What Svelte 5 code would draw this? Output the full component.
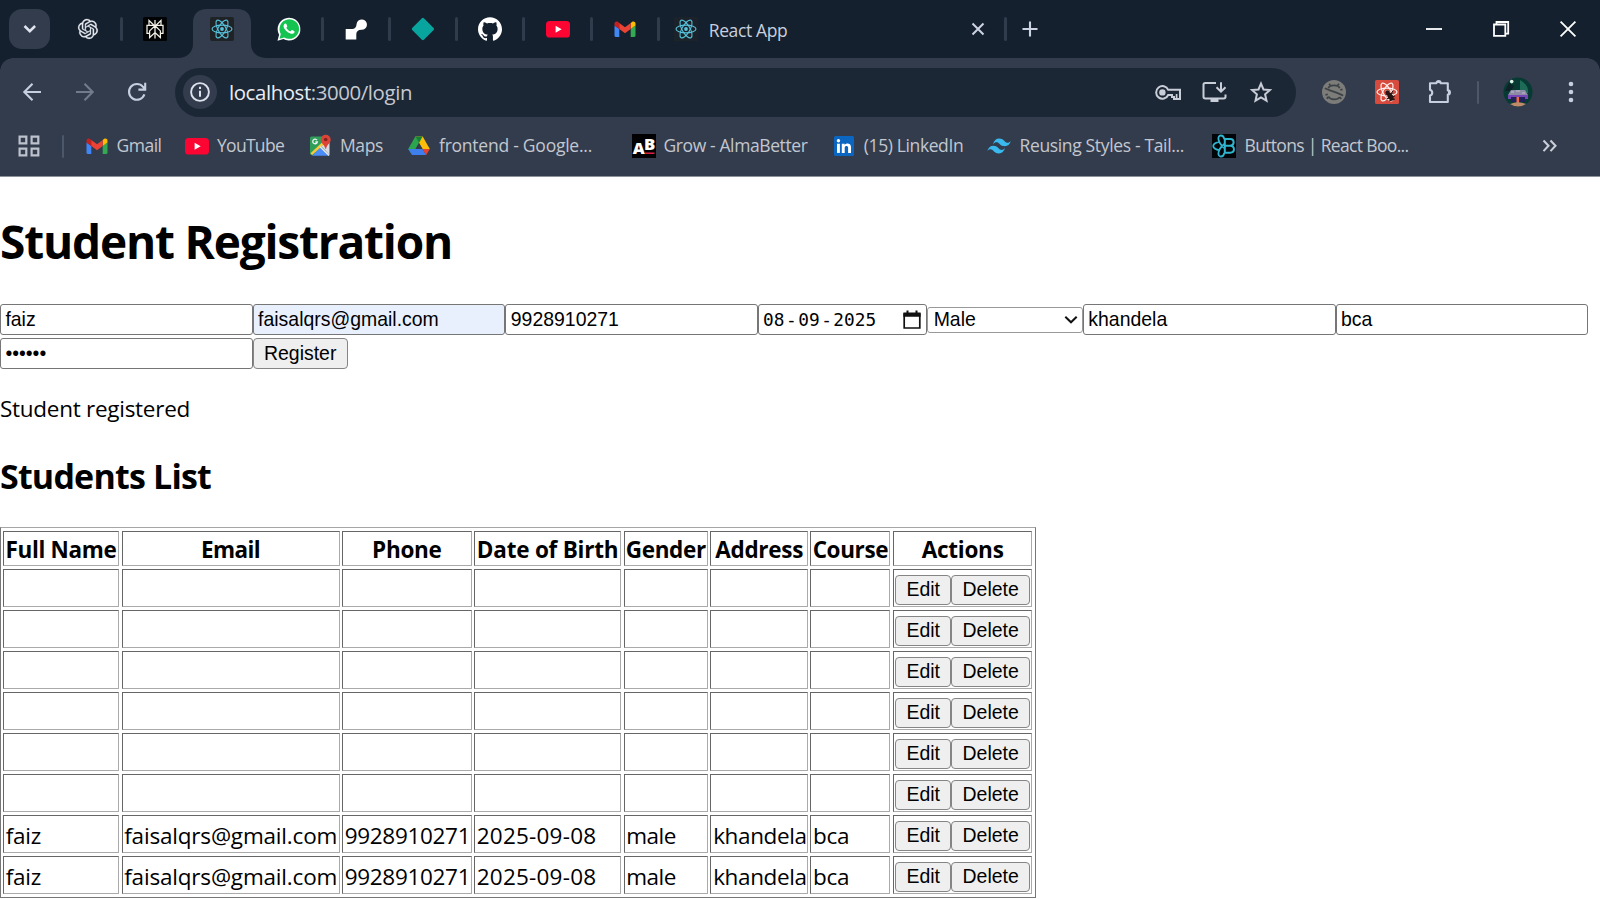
<script>
  // Adjusts letter spacing so that a label takes the given width.
  function fit(node, width) {
    const natural = node.getBoundingClientRect().width;
    node.style.letterSpacing = (width - natural) / node.textContent.length + 'px';
  }

  const tabs = [
    { icon: 'openai', sep: true },
    { icon: 'perplexity' },
    { icon: 'react', active: true },
    { icon: 'whatsapp', sep: true },
    { icon: 'shape', sep: true },
    { icon: 'diamond', sep: true },
    { icon: 'github', sep: true },
    { icon: 'youtube', sep: true },
    { icon: 'gmail', sep: true }
  ];

  const bookmarks = [
    { icon: 'gmail', label: 'Gmail', left: 85, gap: 7.5, width: 45 },
    { icon: 'youtube', label: 'YouTube', left: 184.5, gap: 8.5, width: 67 },
    { icon: 'maps', label: 'Maps', left: 308, gap: 8, width: 43 },
    { icon: 'drive', label: 'frontend - Google...', left: 406.5, gap: 8.5, width: 153 },
    { icon: 'ab', label: 'Grow - AlmaBetter', left: 631.5, gap: 8, width: 144 },
    { icon: 'linkedin', label: '(15) LinkedIn', left: 831.5, gap: 8.3, width: 99.5 },
    { icon: 'tailwind', label: 'Reusing Styles - Tail...', left: 987.5, gap: 8, width: 164.5 },
    { icon: 'rb', label: 'Buttons | React Boo...', left: 1212, gap: 8.5, width: 164 }
  ];
  const placed = bookmarks.map((b, i) => {
    const prev = bookmarks[i - 1];
    const start = prev ? prev.left + 24 + prev.gap + prev.width : 64;
    return { ...b, before: b.left - start };
  });

  const heads = [
    ['Full Name', 111], ['Email', 59], ['Phone', 69.5], ['Date of Birth', 141.5],
    ['Gender', 80], ['Address', 88], ['Course', 75.5], ['Actions', 82]
  ];
  const filled = [
    ['faiz', 35.5], ['faisalqrs@gmail.com', 213], ['9928910271', 125.5],
    ['2025-09-08', 119.5], ['male', 49.5], ['khandela', 93.5], ['bca', 36]
  ];
  const empty = filled.map(() => null);
  const rows = [empty, empty, empty, empty, empty, empty, filled, filled];
</script>

{#snippet atom(color, sw)}
  <g fill="none" stroke={color} stroke-width={sw}>
    <ellipse cx="12" cy="12" rx="10" ry="3.9" />
    <ellipse cx="12" cy="12" rx="10" ry="3.9" transform="rotate(60 12 12)" />
    <ellipse cx="12" cy="12" rx="10" ry="3.9" transform="rotate(120 12 12)" />
  </g>
  <circle cx="12" cy="12" r="1.9" fill={color} />
{/snippet}

{#snippet icon(name)}
  <svg class="ico" viewBox="0 0 24 24" width="24" height="24" aria-hidden="true">
    {#if name === 'openai'}
      <g transform="translate(2 2) scale(.83)"><path fill="#e8ebf1" stroke="#e8ebf1" stroke-width=".3" d="M22.2819 9.8211a5.9847 5.9847 0 0 0-.5157-4.9108 6.0462 6.0462 0 0 0-6.5098-2.9A6.0651 6.0651 0 0 0 4.9807 4.1818a5.9847 5.9847 0 0 0-3.9977 2.9 6.0462 6.0462 0 0 0 .7427 7.0966 5.98 5.98 0 0 0 .511 4.9107 6.051 6.051 0 0 0 6.5146 2.9001A5.9847 5.9847 0 0 0 13.2599 24a6.0557 6.0557 0 0 0 5.7718-4.2058 5.9894 5.9894 0 0 0 3.9977-2.9001 6.0557 6.0557 0 0 0-.7475-7.0729zm-9.022 12.6081a4.4755 4.4755 0 0 1-2.8764-1.0408l.1419-.0804 4.7783-2.7582a.7948.7948 0 0 0 .3927-.6813v-6.7369l2.02 1.1686a.071.071 0 0 1 .038.052v5.5826a4.504 4.504 0 0 1-4.4945 4.4944zm-9.6607-4.1254a4.4708 4.4708 0 0 1-.5346-3.0137l.142.0852 4.783 2.7582a.7712.7712 0 0 0 .7806 0l5.8428-3.3685v2.3324a.0804.0804 0 0 1-.0332.0615L9.74 19.9502a4.4992 4.4992 0 0 1-6.1408-1.6464zM2.3408 7.8956a4.485 4.485 0 0 1 2.3655-1.9728V11.6a.7664.7664 0 0 0 .3879.6765l5.8144 3.3543-2.0201 1.1685a.0757.0757 0 0 1-.071 0l-4.8303-2.7865A4.504 4.504 0 0 1 2.3408 7.872zm16.5963 3.8558L13.1038 8.364 15.1192 7.2a.0757.0757 0 0 1 .071 0l4.8303 2.7913a4.4944 4.4944 0 0 1-.6765 8.1042v-5.6772a.79.79 0 0 0-.407-.667zm2.0107-3.0231l-.142-.0852-4.7735-2.7818a.7759.7759 0 0 0-.7854 0L9.409 9.2297V6.8974a.0662.0662 0 0 1 .0284-.0615l4.8303-2.7866a4.4992 4.4992 0 0 1 6.6802 4.66zM8.3065 12.863l-2.02-1.1638a.0804.0804 0 0 1-.038-.0567V6.0742a4.4992 4.4992 0 0 1 7.3757-3.4537l-.142.0805L8.704 5.459a.7948.7948 0 0 0-.3927.6813zm1.0976-2.3654l2.602-1.4998 2.6069 1.4998v2.9994l-2.5974 1.4997-2.6067-1.4997Z" /></g>
    {:else if name === 'perplexity'}
      <rect width="24" height="24" rx="1.5" fill="#010203" />
      <path fill="none" stroke="#f4f1e6" stroke-width="1.25" d="M12 3v18.5M6 3.5v4.8h12V3.5L12 9.2zM6 8.3H4v8h2.6M18 8.3h2v8h-2.6M12 8.7l-5.4 5.2v6.6l5.4-4.9 5.4 4.9v-6.6z" />
    {:else if name === 'react' || name === 'react-plain'}
      <rect x="0" y="0" width="24" height="24" rx={name === 'react' ? 2 : 0} fill={name === 'react' ? '#202326' : '#1b2229'} />
      {@render atom('#58c3dc', 1.1)}
    {:else if name === 'whatsapp'}
      <path fill="#fff" d="M.5 23.7 2.1 17.8A11.4 11.4 0 1 1 6.4 22.1z" />
      <path fill="#14c350" d="M2.5 21.7 3.8 17a9.8 9.8 0 1 1 3.5 3.5z" />
      <path fill="#fff" transform="translate(1.1 .8) scale(.91)" d="M17.472 14.382c-.297-.149-1.758-.867-2.03-.967-.273-.099-.471-.148-.67.15-.197.297-.767.966-.94 1.164-.173.199-.347.223-.644.075-.297-.15-1.255-.463-2.39-1.475-.883-.788-1.48-1.761-1.653-2.059-.173-.297-.018-.458.13-.606.134-.133.298-.347.446-.52.149-.174.198-.298.298-.497.099-.198.05-.371-.025-.52-.075-.149-.669-1.612-.916-2.207-.242-.579-.487-.5-.669-.51-.173-.008-.371-.01-.57-.01-.198 0-.52.074-.792.372-.272.297-1.04 1.016-1.04 2.479 0 1.462 1.065 2.875 1.213 3.074.149.198 2.096 3.2 5.077 4.487.709.306 1.262.489 1.694.625.712.227 1.36.195 1.871.118.571-.085 1.758-.719 2.006-1.413.248-.694.248-1.289.173-1.413-.074-.124-.272-.198-.57-.347" />
    {:else if name === 'shape'}
      <path fill="#fff" d="M1.7 12h6.5c2.5 0 4.2-1.5 4.4-5A5.2 5.2 0 1 1 17.5 12.8c-3.5.1-5 1.5-5.2 4.2v5.5H1.7z" />
    {:else if name === 'diamond'}
      <path fill="#08a59f" d="M10.9 1.3q1-.9 2 0l9.7 9.7q.9 1 0 2l-9.7 9.7q-1 .9-2 0L1.2 13q-.9-1 0-2z" />
    {:else if name === 'github'}
      <path fill="#fff" d="M12 .297c-6.63 0-12 5.373-12 12 0 5.303 3.438 9.8 8.205 11.385.6.113.82-.258.82-.577 0-.285-.01-1.04-.015-2.04-3.338.724-4.042-1.61-4.042-1.61C4.422 18.07 3.633 17.7 3.633 17.7c-1.087-.744.084-.729.084-.729 1.205.084 1.838 1.236 1.838 1.236 1.07 1.835 2.809 1.305 3.495.998.108-.776.417-1.305.76-1.605-2.665-.3-5.466-1.332-5.466-5.93 0-1.31.465-2.38 1.235-3.22-.135-.303-.54-1.523.105-3.176 0 0 1.005-.322 3.3 1.23.96-.267 1.98-.399 3-.405 1.02.006 2.04.138 3 .405 2.28-1.552 3.285-1.23 3.285-1.23.645 1.653.24 2.873.12 3.176.765.84 1.23 1.91 1.23 3.22 0 4.61-2.805 5.625-5.475 5.92.42.36.81 1.096.81 2.22 0 1.606-.015 2.896-.015 3.286 0 .315.21.69.825.57C20.565 22.092 24 17.592 24 12.297c0-6.627-5.373-12-12-12" />
    {:else if name === 'youtube'}
      <rect x="0" y="4" width="24" height="16.5" rx="3.6" fill="#fc0533" />
      <path fill="#fff" d="M9.6 8.8v6.9l6.1-3.45z" />
    {:else if name === 'gmail'}
      <path fill="#4285f4" d="M1.5 8.5 6.3 12v8H3a1.5 1.5 0 0 1-1.5-1.5z" />
      <path fill="#34a853" d="M17.7 12l4.8-3.5v10A1.5 1.5 0 0 1 21 20h-3.3z" />
      <path fill="#fbbc04" d="M17.7 6l1.3-1c1.5-1 3.5 0 3.5 1.8v1.8L17.7 12z" />
      <path fill="#c5221f" d="M1.5 6.8C1.5 5 3.5 4 5 5l1.3 1v6L1.5 8.6z" />
      <path fill="#ea4335" d="M6.3 6 12 10.2 17.7 6v6L12 16.2 6.3 12z" />
    {:else if name === 'maps'}
      <path fill="#2f9e58" d="M3.5 2.5H17V12L4 21.5 2 20V4a1.5 1.5 0 0 1 1.5-1.5z" />
      <path fill="#d7dce2" d="m13 12 8.5 9V8z" />
      <path fill="#4a8df6" d="m4 21.7 8.7-8.9 8 8.9z" />
      <path fill="none" stroke="#f8c93a" stroke-width="2.5" d="M3.3 20.2 16.5 8" />
      <path fill="none" stroke="#eef1f4" stroke-width="1.3" d="M9 6.2a2.3 2.3 0 1 0 .3 1.8H7.3m4.8 4.7 9 8.8" />
      <path fill="#dc4437" d="M17.7.7a5 5 0 0 1 5 5c0 3.5-3.8 4.5-4.6 9.1h-.8c-.8-4.6-4.6-5.6-4.6-9.1a5 5 0 0 1 5-5z" />
      <circle cx="17.7" cy="5.5" r="1.8" fill="#84221d" />
    {:else if name === 'drive'}
      <path fill="#fdbd08" d="M8.3 2.5h7.4L22.8 15h-7.3z" />
      <path fill="#118338" d="M8.3 2.5h7.3L12 9z" />
      <path fill="#2ba64e" d="M8.3 2.5 12 9 5.2 21 1.2 15z" />
      <path fill="#3f7eed" d="M1.2 15h14.3l3.7 6H5.2z" />
      <path fill="#e64234" d="M15.5 15h7.3l-3.6 6z" />
      <path fill="#323c4d" d="m12 9 3.5 6h-7z" />
    {:else if name === 'ab'}
      <rect width="24" height="24" fill="#010103" />
      <text x=".8" y="19.5" font-size="16" textLength="12" lengthAdjust="spacingAndGlyphs" class="logo">A</text>
      <text x="12" y="16.2" font-size="16" textLength="11.3" lengthAdjust="spacingAndGlyphs" class="logo">B</text>
      <path stroke="#ef2349" stroke-width="1.4" d="M13 19.2h9.5" />
    {:else if name === 'linkedin'}
      <rect x="2" y="2" width="20" height="20" rx="1.5" fill="#0b66c2" />
      <path fill="#fff" d="M5 9.7h2.9v9.2H5z" /><circle cx="6.45" cy="6.7" r="1.7" fill="#fff" />
      <path fill="#fff" d="M9.8 9.7h2.8V11c1.2-2.1 6.4-2.3 6.4 2.1v5.8h-2.9v-5.1c0-2.5-3.4-2.2-3.4 0v5.1H9.8z" />
    {:else if name === 'tailwind'}
      <path fill="#39b9ee" d="M6 10.2q1.5-5.6 6.2-5.6c4.7 0 5 3.5 7.6 4.1 1.5.3 2.8-.3 4-1.7q-1.5 5.2-6 5.2c-4.6 0-5.2-3.4-7.7-4-1.6-.3-2.8.3-4.1 2zM.2 17.3q1.5-5.6 6.1-5.6c4.7 0 5 3.5 7.6 4.1 1.6.3 2.8-.3 4.1-1.8q-1.5 5.4-6.1 5.4c-4.6 0-5.2-3.5-7.7-4-1.5-.3-2.7.2-4 1.9z" />
    {:else if name === 'rb'}
      <rect width="24" height="24" fill="#020507" />
      <g fill="none" stroke="#2fb5cf" stroke-width="2">
        <path d="M12.8 5h5.4c4.6 0 4.6 6.4 0 6.8 5 .3 5 6.9 0 6.9h-5.4zM12.8 11.8h5.4" />
        <path stroke-width="1.8" d="M12.3 5c-1-5-6.8-4.5-5.8.6.5 3 3 6 5.8 8.4M12.3 19c-1 5-6.8 4.5-5.8-.6.5-3 3-6 5.8-8.4M8 7.6c-9 1.8-9 7 0 8.8" />
      </g>
    {/if}
  </svg>
{/snippet}

<div class="window">
  <div class="tabstrip">
    <div class="search-tabs">
      <svg width="16" height="12" viewBox="0 0 16 12"><path d="m2.5 3 5.3 5.2L13.1 3" fill="none" stroke="#dfe4ee" stroke-width="2.5" /></svg>
    </div>
    {#each tabs as t}
      <div class="tab" class:active={t.active} class:sep={t.sep}>
        {#if t.active}
          <svg class="tab-shape" width="88" height="50" viewBox="0 0 88 50"><path fill="#323c4d" d="M0 50v-1c9 0 15-6 15-14V14C15 5 20 0 29 0h30c9 0 14 5 14 14v21c0 8 6 14 15 14v1z" /></svg>
        {/if}
        {@render icon(t.icon)}
      </div>
    {/each}
    <div class="tab wide sep">
      {@render icon('react-plain')}
      <span class="tab-title"><span use:fit={78.5}>React App</span></span>
      <svg class="close" width="14" height="14" viewBox="0 0 14 14"><path d="m1.5 1.5 11 11m0-11-11 11" stroke="#ccd3e2" stroke-width="2" /></svg>
    </div>
    <svg class="plus" width="16" height="16" viewBox="0 0 16 16"><path d="M8 .5v15M.5 8h15" stroke="#ccd3e2" stroke-width="2.1" /></svg>
    <div class="controls">
      <svg width="16" height="16" viewBox="0 0 16 16"><path d="M0 8h16" stroke="#fff" stroke-width="1.8" /></svg>
      <svg width="16" height="16" viewBox="0 0 16 16"><path d="M3.5 3V1h11.7v11.7h-2M1 3.5h11.3v11.3H1z" fill="none" stroke="#fff" stroke-width="1.8" /></svg>
      <svg width="16" height="16" viewBox="0 0 16 16"><path d="m.6.6 14.8 14.8m0-14.8L.6 15.4" stroke="#fff" stroke-width="1.8" /></svg>
    </div>
  </div>

  <div class="chrome">
    <div class="toolbar">
      <div class="nav">
        <svg width="20" height="20" viewBox="0 0 20 20"><path d="M19 10H2.5M10.5 1.8 2.3 10l8.2 8.2" fill="none" stroke="#c5cfdf" stroke-width="2.1" /></svg>
        <svg width="20" height="20" viewBox="0 0 20 20"><path d="M1 10h16.5M9.5 1.8l8.2 8.2-8.2 8.2" fill="none" stroke="#717b8c" stroke-width="2.1" /></svg>
        <svg width="20" height="20" viewBox="0 0 20 20"><path d="M17.4 12.4A7.9 7.9 0 1 1 16 4.8l2 2.2M18.2.8v6.8h-6.8" fill="none" stroke="#c5cfdf" stroke-width="2.1" /></svg>
      </div>
      <div class="omnibox">
        <div class="info">
          <svg width="20" height="20" viewBox="0 0 20 20"><circle cx="10" cy="10" r="8.9" fill="none" stroke="#dde2ec" stroke-width="1.9" /><path d="M10 8.8v6M10 4.8v2.2" stroke="#dde2ec" stroke-width="2" /></svg>
        </div>
        <span class="url"><span use:fit={183}><b>localhost</b>:3000/login</span></span>
        <svg class="oi key" width="28" height="24" viewBox="0 0 28 24"><path fill="none" stroke="#c9cdd7" stroke-width="2" d="M14.2 9.8a6.3 6.3 0 1 0 0 5.2h3.8v2.1h2v2h6V9.8z" /><circle cx="8.4" cy="12.4" r="3.2" fill="#c9cdd7" /><path d="M22.6 14v4.5" stroke="#c9cdd7" stroke-width="1.7" /></svg>
        <svg class="oi" width="26" height="24" viewBox="0 0 26 24"><path fill="none" stroke="#c9cdd7" stroke-width="2" d="M14 3H3.2q-1.7 0-1.7 1.7v12q0 1.7 1.7 1.7h18.6q1.7 0 1.7-1.7v-2.2M19 2.3v9M14.5 7.2l4.5 4.5 4.5-4.5" /><path fill="#c9cdd7" d="M8.5 18.5h8V22h-8z" /></svg>
        <svg class="oi" width="24" height="24" viewBox="0 0 24 24"><path fill="none" stroke="#c9cdd7" stroke-width="2" d="m12 3.6 2.5 5.9 6.4.6-4.8 4.2 1.4 6.3-5.5-3.3-5.5 3.3 1.4-6.3-4.8-4.2 6.4-.6z" /></svg>
      </div>
      <svg class="ext" width="24" height="24" viewBox="0 0 24 24"><circle cx="12" cy="12" r="12" fill="#7c7c79" /><path fill="none" stroke="#3d4248" stroke-width="1.7" d="M8.3 5.2 7 3.7M15.7 5.2 17 3.7M6.3 8.2C7.5 4.4 16.5 4.4 17.7 8.2M18.3 10l2.2-.6M6.5 16.5c1.8 3.8 9.2 3.8 11 .6M5.8 14.2l-2.4.8M6.5 17l-1.8 1.6M17.5 17l1.8 1.8M2.8 8.2C7 10.4 17 13 21.2 15.6" /></svg>
      <svg class="ext" width="24" height="24" viewBox="0 0 24 24"><rect width="24" height="24" rx="1.5" fill="#d64b3d" />{@render atom('#fff1ee', 1.2)}<g fill="#291513"><ellipse cx="15.5" cy="16.5" rx="2.5" ry="4.4" transform="rotate(-35 15.5 16.5)" /><circle cx="12.3" cy="12.4" r="2.1" /></g><path stroke="#291513" stroke-width="1" d="m10.5 15 7.5-2m-6.5 6 8.5-3M14 21l6-2M18 10.8l-5.5 8" /></svg>
      <svg class="ext puzzle" width="26" height="26" viewBox="0 0 26 26"><path fill="none" stroke="#c5cfdf" stroke-width="2.1" stroke-linejoin="round" d="M3 4.2h6.4a2.1 2.1 0 0 1 4.2 0h7.2v7.2a2.1 2.1 0 0 1 0 4.2V23H3v-6.4a3 3 0 0 0 0-5.8z" /><path fill="#c5cfdf" d="M9.4 4a2 2 0 0 1 4.2 0zM21 11.4a2 2 0 0 1 0 4.2z" /></svg>
      <i class="bar"></i>
      <svg class="avatar" width="30" height="30" viewBox="0 0 30 30"><circle cx="15" cy="15" r="14.5" fill="#063a32" /><path fill="#1e6b57" d="M17 3q9 5 8 13h-8z" /><path fill="#0c2226" d="M2 14h6l3-5-5-3z" /><circle cx="8.7" cy="4.6" r="1.8" fill="#dff5eb" /><path fill="#8c8aa5" d="m5 18 3-5h14l3 5z" /><path stroke="#c3bad0" d="M8 15h3m2-1h4m2 2h3" /><path fill="#7747b7" d="M5 18h20v4H5z" /><path fill="#202158" d="M8 20h14v5H8z" /><path fill="#ec694d" d="M13.5 20h2.6v6h-2.6z" /><path fill="#c08b68" d="M7 27q8-3.5 16 0-8 5-16 0z" /></svg>
      <svg class="dots" width="6" height="22" viewBox="0 0 6 22"><g fill="#c5cfdf"><circle cx="3" cy="3" r="2.3" /><circle cx="3" cy="11" r="2.3" /><circle cx="3" cy="19" r="2.3" /></g></svg>
    </div>

    <div class="bookmarks">
      <svg class="apps" width="22" height="22" viewBox="0 0 22 22"><path fill="none" stroke="#bdc2cc" stroke-width="2.2" d="M1.6 1.6h6.7v6.7H1.6zm12 0h6.7v6.7h-6.7zm-12 12h6.7v6.7H1.6zm12 0h6.7v6.7h-6.7z" /></svg>
      <i class="bar"></i>
      {#each placed as b}
        <div class="bm" style="margin-left:{b.before}px;width:{24 + b.gap + b.width}px;gap:{b.gap}px">
          {@render icon(b.icon)}<span class="label" use:fit={b.width}>{b.label}</span>
        </div>
      {/each}
      <svg class="more" width="16" height="14" viewBox="0 0 16 14"><path d="m1.5 1.5 5 5.3-5 5.3m7-10.6 5 5.3-5 5.3" fill="none" stroke="#c9ced9" stroke-width="2.1" /></svg>
    </div>
  </div>

  <main>
    <h1><span use:fit={452}>Student Registration</span></h1>
    <form onsubmit={(e) => e.preventDefault()}>
      <div class="line">
        <input value="faiz" />
        <input class="autofill" value="faisalqrs@gmail.com" />
        <input value="9928910271" />
        <div class="date">
          <span>08</span><span>-</span><span>09</span><span>-</span><span>2025</span>
          <svg width="18" height="20" viewBox="0 0 18 20"><path d="M1.2 4h15.6v14H1.2z" fill="none" stroke="#111" stroke-width="1.7" /><path fill="#111" d="M.4 2.5h17.2v4.3H.4zM3.5.5h2v3h-2zm9 0h2v3h-2z" /></svg>
        </div>
        <div class="select">Male
          <svg width="14" height="10" viewBox="0 0 14 10"><path d="m1.3 1.7 5.7 5.6 5.7-5.6" fill="none" stroke="#111" stroke-width="2" /></svg>
        </div>
        <input value="khandela" />
        <input value="bca" />
      </div>
      <div class="line second">
        <input value="••••••" />
        <button class="register">Register</button>
      </div>
    </form>
    <p><span use:fit={190}>Student registered</span></p>
    <h2><span use:fit={211}>Students List</span></h2>
    <table>
      <thead>
        <tr>{#each heads as [h, w]}<th><span use:fit={w}>{h}</span></th>{/each}</tr>
      </thead>
      <tbody>
        {#each rows as r}
          <tr>
            {#each r as c}<td>{#if c}<span use:fit={c[1]}>{c[0]}</span>{/if}</td>{/each}
            <td class="actions"><button class="edit">Edit</button><button class="delete">Delete</button></td>
          </tr>
        {/each}
      </tbody>
    </table>
  </main>
</div>

<style>
  :global(body) { overflow: hidden; background: #fff; }
  * { box-sizing: border-box; }
  svg { display: block; flex: none; overflow: visible; }
  .window { width: 1600px; height: 899px; overflow: hidden; display: flex; flex-direction: column; font-family: "Open Sans", "Noto Sans", sans-serif; color: #000; white-space: nowrap; background: #fff; }
  .tabstrip { flex: none; height: 58px; background: #15202e; display: flex; align-items: center; padding-left: 9px; }
  .search-tabs { width: 41px; height: 40px; border-radius: 13px; background: #323c4d; display: grid; place-items: center; margin-right: 4px; flex: none; }
  .tab { position: relative; width: 67.15px; height: 58px; flex: none; display: flex; align-items: center; justify-content: center; }
  .tab .ico { position: relative; }
  .tab-shape { position: absolute; left: -10.5px; top: 9px; }
  .tab.sep::after { content: ""; position: absolute; right: -1.5px; top: 17px; width: 3px; height: 24px; border-radius: 2px; background: #303b4b; }
  .tab.wide { width: 347px; justify-content: flex-start; padding-left: 15.5px; }
  .tab-title { width: 80px; font-size: 17.5px; line-height: 24px; color: #c8cfdd; margin: 2px 0 0 11px; }
  .close { margin-left: 182px; }
  .plus { margin-left: 17px; }
  .controls { margin-left: auto; padding-right: 24px; display: flex; gap: 51px; }
  .logo { fill: #fff; font-family: "Open Sans", sans-serif; font-weight: 800; }

  .chrome { flex: none; height: 119px; background: linear-gradient(#323c4d, #323c4d) 0 0 / 100% 118px no-repeat, #8c919a; position: relative; }
  .chrome::before, .chrome::after { content: ""; position: absolute; top: 0; width: 13px; height: 13px; }
  .chrome::before { left: 0; background: radial-gradient(circle at 13px 13px, #323c4d 12.5px, #15202e 13px); }
  .chrome::after { right: 0; background: radial-gradient(circle at 0 13px, #323c4d 12.5px, #15202e 13px); }
  .toolbar { height: 68px; display: flex; align-items: center; }
  .nav { width: 175px; display: flex; gap: 32.5px; padding-left: 22px; flex: none; }
  .omnibox { width: 1121px; height: 49px; border-radius: 25px; background: #1c2736; display: flex; align-items: center; padding: 0 23px 0 8px; flex: none; }
  .info { width: 34px; height: 34px; border-radius: 50%; background: #323c4d; display: grid; place-items: center; }
  .url { font-size: 20.4px; line-height: 28px; color: #c5c9d1; margin: 0 auto 1px 12px; }
  .url b { font-weight: 400; color: #e9edf5; }
  .oi { margin-left: 21.5px; }
  .key + .oi { margin-left: 19.5px; }
  .ext { margin-left: 29px; }
  .omnibox + .ext { margin-left: 26px; }
  .ext.puzzle { margin-left: 28px; }
  .bar { width: 2px; height: 23px; border-radius: 1px; background: #4c576a; flex: none; }
  .toolbar .bar { margin-left: 23.5px; }
  .avatar { margin-left: 24px; }
  .dots { margin-left: 35px; }
  .bookmarks { height: 40px; display: flex; align-items: center; color: #c3c7cf; font-size: 17.5px; line-height: 24px; }
  .apps { margin-left: 17.5px; }
  .bookmarks .bar { margin-left: 22.5px; }
  .bm { display: flex; align-items: center; flex: none; }
  .label { margin-bottom: 2px; }
  .more { margin-left: 133.5px; }

  main { position: relative; flex: 1; }
  h1 { margin: 0; padding-top: 32px; height: 127px; font-size: 46px; line-height: 64px; font-weight: 700; }
  .line { display: flex; align-items: center; height: 31px; }
  .second { margin-top: 3px; }
  input, .date, .select, button { font: 19.44px "Liberation Sans", Arial, sans-serif; color: #000; border: 1px solid #767676; border-radius: 3px; background: #fff; margin: 0; flex: none; }
  input { width: 252.7px; height: 31px; padding: 0 4px 0 4.4px; outline: none; }
  .autofill { background: #e8f0fe; }
  .date { width: 169.4px; height: 31px; padding-left: 4px; display: flex; align-items: center; gap: 1.5px; font-family: "DejaVu Sans Mono", monospace; font-size: 17.8px; }
  .date svg { margin-left: auto; margin-right: 5.4px; }
  .select { width: 155.5px; height: 26px; border-color: #999; padding: 0 4px 0 5.2px; display: flex; align-items: center; justify-content: space-between; }
  button { background: #efefef; border-color: #858585; border-radius: 4px; padding: 0 0 1px; text-align: center; }
  .register { width: 95px; height: 31px; }
  p { margin: 23px 0 0; height: 34px; font-size: 22.5px; line-height: 34px; }
  h2 { margin: 26px 0 0; height: 75px; font-size: 34px; line-height: 48px; font-weight: 700; }
  table { display: grid; grid-template-columns: 116px 218px 129.6px 147px 84.4px 97.4px 80px 139.5px; grid-template-rows: 35.4px; grid-auto-rows: 38px; gap: 3px 2.5px; width: 1036px; height: 371px; padding: 3px 2px 2px; border: 1px solid; border-color: #a6a6a6 #777 #777 #777; }
  thead, tbody, tr { display: contents; }
  th, td { border: 1px solid; border-color: #666 #aaa #aaa #666; padding: 0 1.7px; font-size: 22.5px; line-height: 39px; text-align: left; overflow: hidden; }
  th { text-align: center; line-height: 36px; padding: 0; }
  .actions { display: flex; padding: 5px 1.3px 0; }
  .actions button { height: 30px; }
  .edit { width: 56px; }
  .delete { width: 79px; }
</style>
